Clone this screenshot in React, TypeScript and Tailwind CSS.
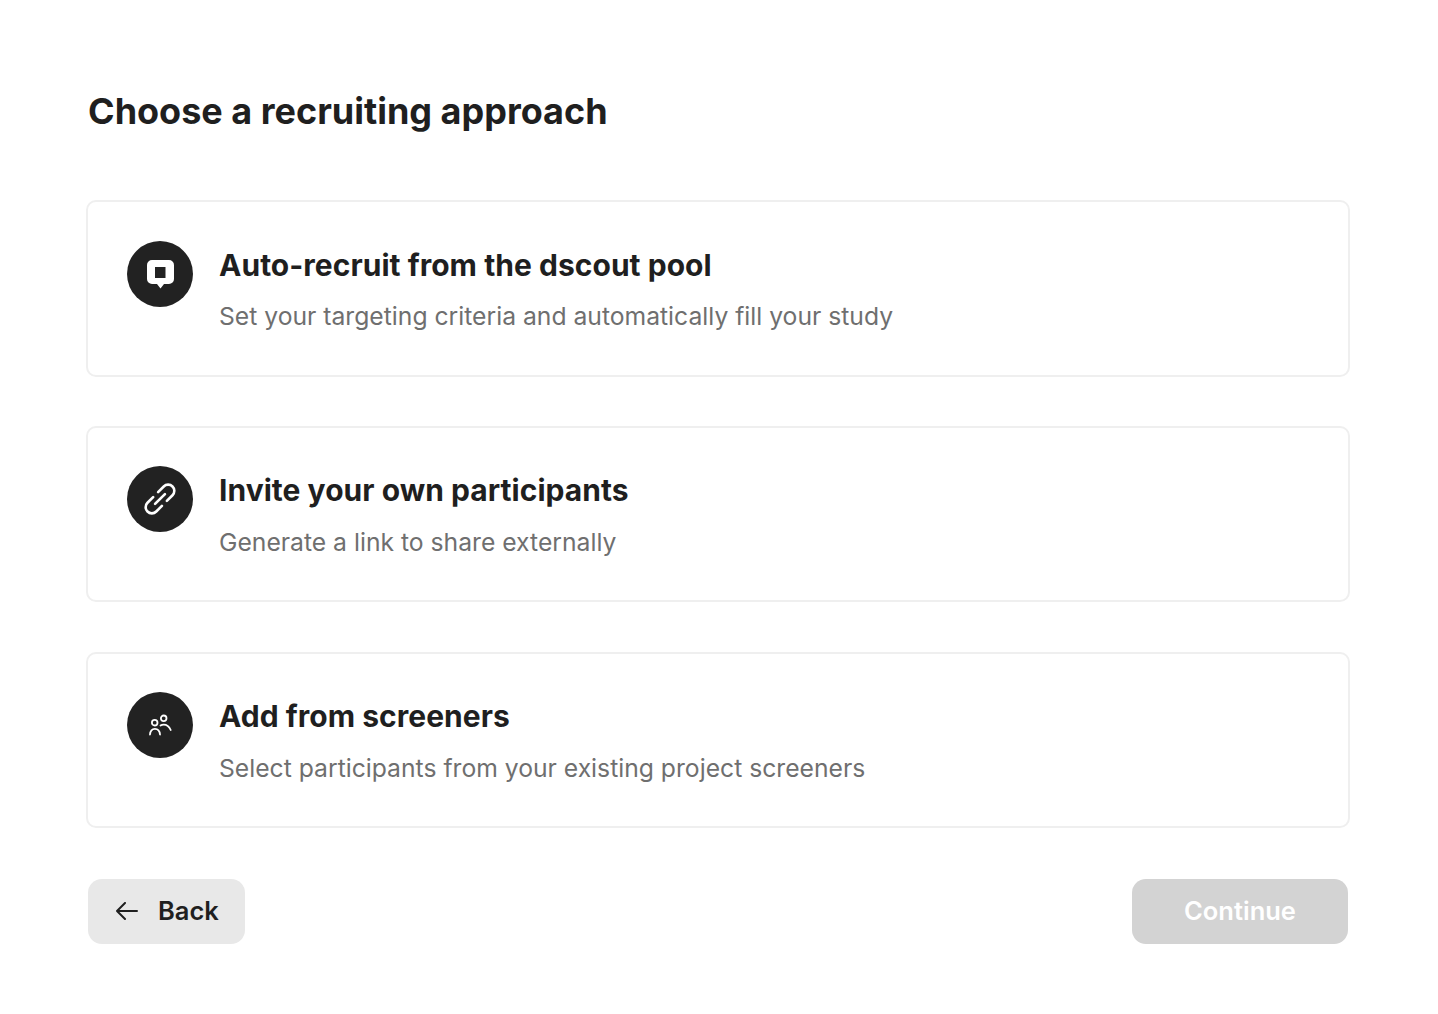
import React from 'react';

const SpeechIcon = () => (
  <svg width="27" height="30" viewBox="0 0 27 30" fill="none">
    <path
      fillRule="evenodd"
      clipRule="evenodd"
      d="M5 1h17a5 5 0 0 1 5 5v14a5 5 0 0 1-5 5h-5l-3.500 4.500L10 25H5a5 5 0 0 1-5-5V6a5 5 0 0 1 5-5Zm3 7v11h10.500V8H8Z"
      fill="#fff"
    />
  </svg>
);

const LinkIcon = () => (
  <svg width="36" height="36" viewBox="-18 -18 36 36" fill="none" stroke="#fff" strokeWidth="2.600" strokeLinecap="round">
    <g transform="rotate(-45)">
      <path d="M-3.500-6.200H-11.500a6.200 6.200 0 0 0 0 12.400H-3.500" />
      <path d="M3.500-6.200H11.500a6.200 6.200 0 0 1 0 12.400H3.500" />
      <path d="M-7 0H7" />
    </g>
  </svg>
);

const PeopleIcon = () => (
  <svg width="24" height="22" viewBox="0 0 24 22" fill="none" stroke="#fff" strokeWidth="1.800" strokeLinecap="round">
    <circle cx="6.700" cy="8.700" r="2.800" />
    <circle cx="15.700" cy="4.300" r="2.800" />
    <path d="M2 20.500c.3-3.800 2.200-5.700 4.900-5.700s4.800 1.900 5.100 5.700" />
    <path d="M12.500 11.600c1-.7 2-1 3.200-1 3 0 5.400 1.800 7 5.400" />
  </svg>
);

const BackArrow = () => (
  <svg width="22" height="18" viewBox="0 0 22 18" fill="none" stroke="#1f1f1f" strokeWidth="2" strokeLinecap="round" strokeLinejoin="round">
    <path d="M1 9h20M9 1 1 9l8 8" />
  </svg>
);

interface OptionCardProps {
  icon: React.ReactNode;
  title: string;
  description: string;
}

const OptionCard: React.FC<OptionCardProps> = ({ icon, title, description }) => (
  <div className="flex h-[176.5px] items-start gap-[26px] rounded-[10px] border-2 border-[#efefef] pl-[39px] pt-[38.5px]">
    <div className="flex h-[66px] w-[66px] shrink-0 items-center justify-center rounded-full bg-[#222222]">
      {icon}
    </div>
    <div className="flex flex-col">
      <h2 className="text-[30px] font-bold leading-[48px] tracking-[0.03px] text-[#1f1f1f]">{title}</h2>
      <p className="mt-[1.6px] text-[24.7px] leading-[52px] text-[#6f6f6f]">{description}</p>
    </div>
  </div>
);

export default function App() {
  return (
    <div className="h-[1014px] bg-white pl-[86px] pr-[88px] pt-[85px] font-['Inter',sans-serif]">
      <h1 className="pl-[2px] text-[36px] font-bold leading-[52px] text-[#1f1f1f]">
        Choose a recruiting approach
      </h1>
      <div className="mt-[63px] flex flex-col gap-[49.4px]">
        <OptionCard
          icon={<SpeechIcon />}
          title="Auto-recruit from the dscout pool"
          description="Set your targeting criteria and automatically fill your study"
        />
        <OptionCard
          icon={<LinkIcon />}
          title="Invite your own participants"
          description="Generate a link to share externally"
        />
        <OptionCard
          icon={<PeopleIcon />}
          title="Add from screeners"
          description="Select participants from your existing project screeners"
        />
      </div>
      <div className="mt-[50.7px] flex items-center justify-between px-[2px]">
        <button className="flex h-[65px] w-[157px] items-center gap-[20px] rounded-[14px] bg-[#e8e8e8] pl-[28px] text-[25.5px] font-semibold text-[#1f1f1f]">
          <BackArrow />
          Back
        </button>
        <button className="h-[65px] w-[216px] rounded-[14px] bg-[#d3d3d3] text-[25.5px] font-semibold text-white">
          Continue
        </button>
      </div>
    </div>
  );
}
